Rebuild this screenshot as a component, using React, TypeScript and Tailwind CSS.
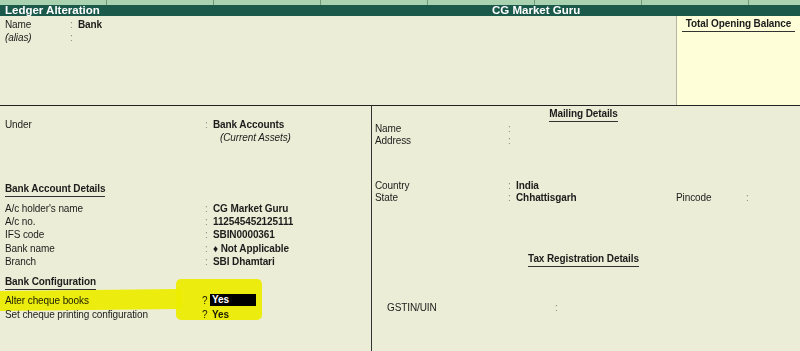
import React from "react";

const font = { fontFamily: '"Liberation Sans", Arial, sans-serif' };

function Row({
  label,
  value,
  labelW,
  italic,
  h = "h-[13.3px]",
}: {
  label: string;
  value?: React.ReactNode;
  labelW: string;
  italic?: boolean;
  h?: string;
}) {
  return (
    <div className={`flex ${h} items-center`}>
      <div className={`${labelW} shrink-0 ${italic ? "italic" : ""}`}>{label}</div>
      <div className="w-[8px] shrink-0 text-[#888]">:</div>
      <div className="font-bold">{value}</div>
    </div>
  );
}

function Heading({ children, className = "" }: { children: React.ReactNode; className?: string }) {
  return (
    <span className={`inline-block border-b border-[#333] pb-[1px] font-bold leading-[13px] ${className}`}>
      {children}
    </span>
  );
}

export default function App() {
  const tabs = [0, 1, 2, 3, 4, 5, 6, 7];
  return (
    <div
      className="relative h-[351px] w-[800px] overflow-hidden bg-[#ecedd6] text-[10px] tracking-[-0.1px] text-[#1c1c1c]"
      style={font}
    >
      {/* strip of tabs above the title */}
      <div className="flex h-[5px] bg-[#a9d3b0]">
        {tabs.map((t) => (
          <div key={t} className="h-full w-[107px] shrink-0 border-r border-[#6d9a78]" />
        ))}
      </div>

      {/* title bar */}
      <div className="flex h-[11px] items-center bg-[#1b5a4a] text-[11.5px] font-bold tracking-normal text-white">
        <div className="w-[492px] pl-[5px]">Ledger Alteration</div>
        <div>CG Market Guru</div>
      </div>

      {/* top section */}
      <div className="flex h-[90px] border-b border-[#222]">
        <div className="flex-1 pl-[5px] pt-[2px]">
          <Row label="Name" value="Bank" labelW="w-[65px]" />
          <Row label="(alias)" labelW="w-[65px]" italic />
        </div>
        <div className="w-[124px] border-l border-[#b5b5a5] bg-[#fefed8] text-center">
          <Heading className="px-[4px]">Total Opening Balance</Heading>
        </div>
      </div>

      {/* lower section */}
      <div className="flex h-[245px]">
        <div className="w-[372px] shrink-0 border-r border-[#333] pl-[5px] pt-[12px]">
          <Row label="Under" value="Bank Accounts" labelW="w-[200px]" />
          <div className="h-[13.3px] pl-[215px] leading-[13.3px] italic">(Current Assets)</div>

          <div className="mt-[36px]">
            <Heading>Bank Account Details</Heading>
          </div>
          <div className="mt-[5px]">
            <Row label="A/c holder's name" value="CG Market Guru" labelW="w-[200px]" />
            <Row label="A/c no." value="112545452125111" labelW="w-[200px]" />
            <Row label="IFS code" value="SBIN0000361" labelW="w-[200px]" />
            <Row label="Bank name" value="♦ Not Applicable" labelW="w-[200px]" />
            <Row label="Branch" value="SBI Dhamtari" labelW="w-[200px]" />
          </div>

          <div className="mt-[6px]">
            <Heading>Bank Configuration</Heading>
          </div>
          <div className="mt-[3px]">
            <div className="flex h-[14px] items-center">
              <div className="w-[197px] shrink-0">Alter cheque books</div>
              <div className="w-[8px] shrink-0">?</div>
              <div className="relative z-10 h-[12px] w-[46px] bg-black pl-[2px] font-bold leading-[12px] text-white">
                Yes
              </div>
            </div>
            <div className="flex h-[14px] items-center">
              <div className="w-[197px] shrink-0">Set cheque printing configuration</div>
              <div className="w-[8px] shrink-0">?</div>
              <div className="pl-[2px] font-bold">Yes</div>
            </div>
          </div>
        </div>

        <div className="flex-1 pr-[5px]">
          <div className="text-center">
            <Heading>Mailing Details</Heading>
          </div>
          <div className="pl-[3px]">
            <Row label="Name" labelW="w-[133px]" h="h-[12px]" />
            <Row label="Address" labelW="w-[133px]" h="h-[12px]" />
          </div>
          <div className="mt-[33px] pl-[3px]">
            <Row label="Country" value="India" labelW="w-[133px]" h="h-[12px]" />
            <div className="flex h-[12px] items-center">
              <div className="w-[133px] shrink-0">State</div>
              <div className="w-[8px] shrink-0 text-[#888]">:</div>
              <div className="w-[160px] shrink-0 font-bold">Chhattisgarh</div>
              <div className="w-[70px] shrink-0">Pincode</div>
              <div className="text-[#888]">:</div>
            </div>
          </div>
          <div className="mt-[48px] text-center">
            <Heading>Tax Registration Details</Heading>
          </div>
          <div className="mt-[34px] flex h-[12px] items-center pl-[15px]">
            <div className="w-[168px] shrink-0">GSTIN/UIN</div>
            <div className="text-[#888]">:</div>
          </div>
        </div>
      </div>

      {/* yellow highlighter strokes over the cheque rows */}
      <div className="pointer-events-none absolute left-[-4px] top-[290px] h-[20px] w-[186px] -rotate-[0.6deg] rounded-[3px] bg-[#ffff10] mix-blend-multiply" />
      <div className="pointer-events-none absolute left-[176px] top-[279px] h-[41px] w-[86px] rounded-[5px] bg-[#ffff10] mix-blend-multiply" />
    </div>
  );
}
